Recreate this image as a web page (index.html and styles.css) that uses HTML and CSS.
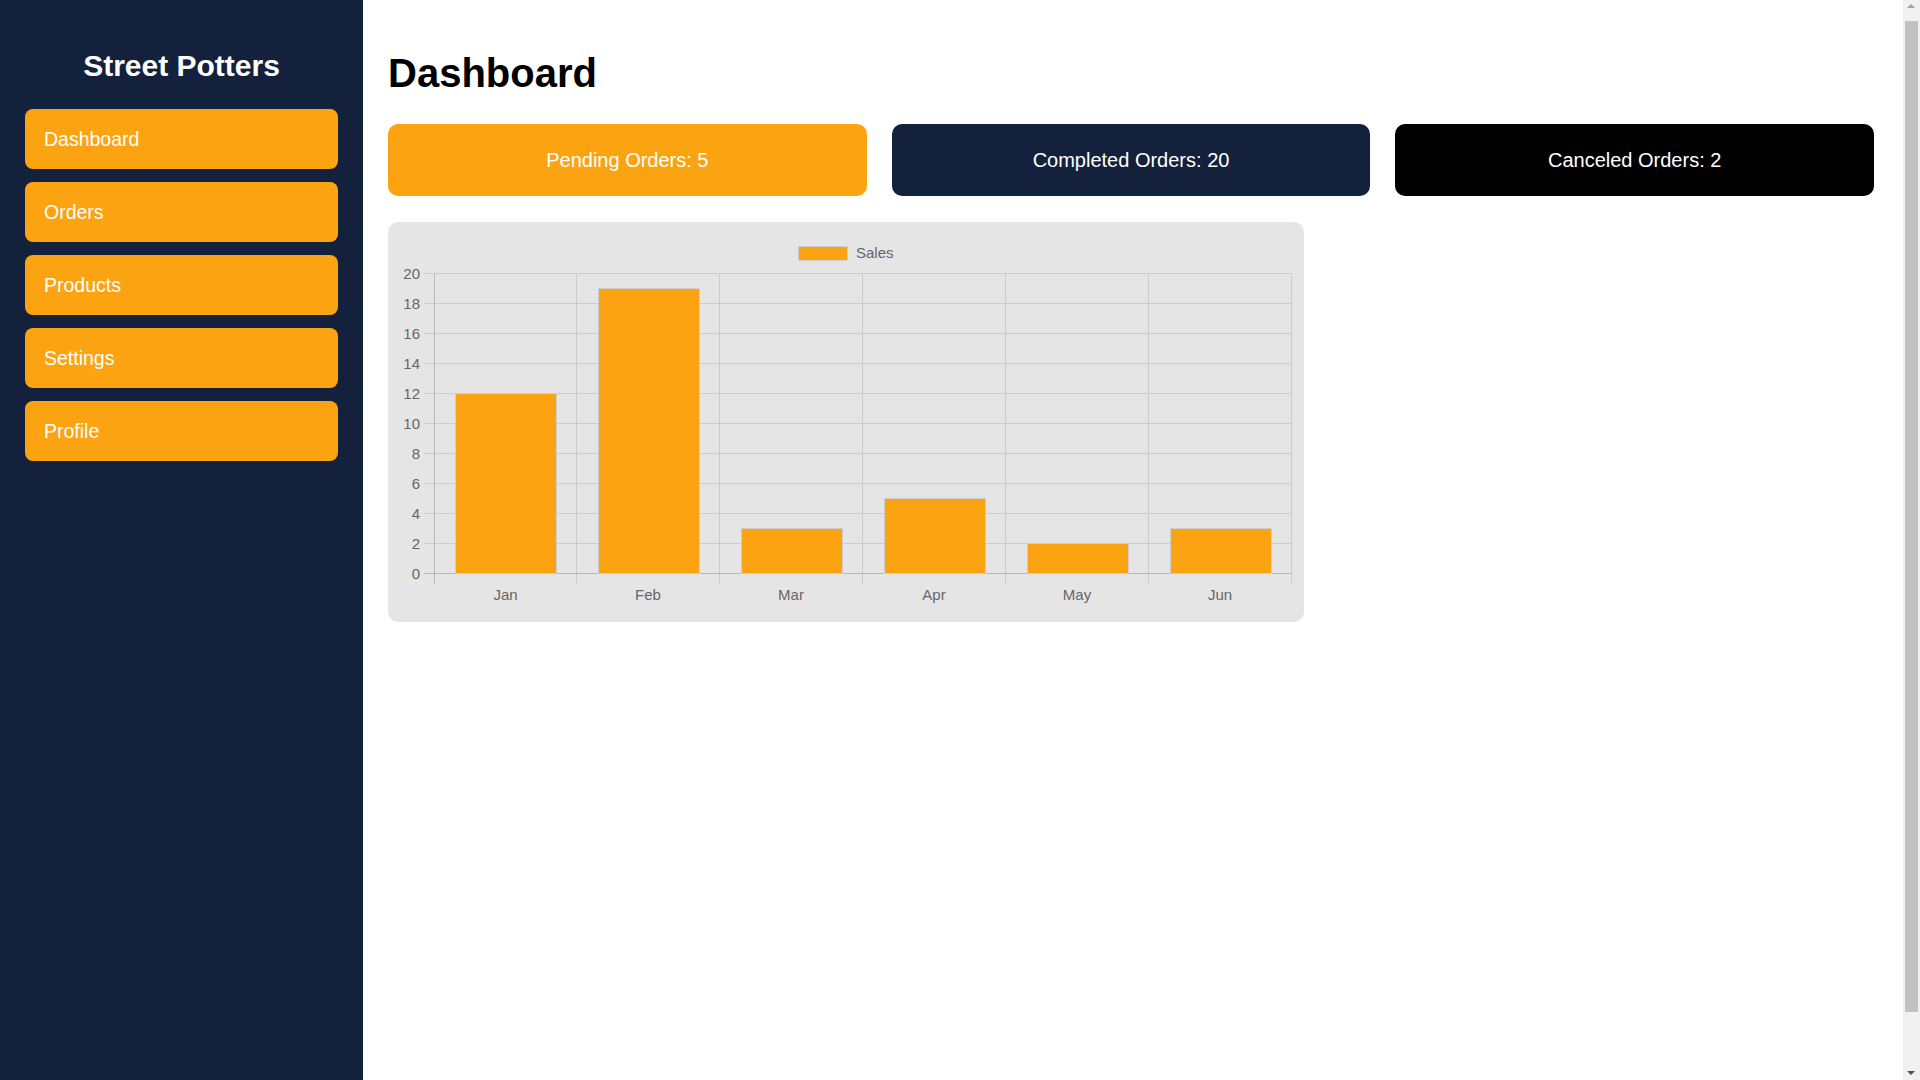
FILE: index.html
```html
<!DOCTYPE html>
<html lang="en">
<head>
    <meta charset="UTF-8">
    <meta name="viewport" content="width=device-width, initial-scale=1.0">
    <title>Street Potters - Dashboard</title>
    <link rel="stylesheet" href="styles.css">
</head>
<body>
    <aside class="sidebar">
        <h2>Street Potters</h2>
        <nav class="menu">
            <a href="#">Dashboard</a>
            <a href="#">Orders</a>
            <a href="#">Products</a>
            <a href="#">Settings</a>
            <a href="#">Profile</a>
        </nav>
    </aside>

    <main class="main">
        <h1>Dashboard</h1>

        <div class="stats">
            <div class="stat pending">Pending Orders: 5</div>
            <div class="stat completed">Completed Orders: 20</div>
            <div class="stat canceled">Canceled Orders: 2</div>
        </div>

        <div class="chart-box">
            <!-- sales per month, bar chart -->
            <svg class="chart" width="896" height="380" viewBox="0 0 896 380">
                <!-- legend -->
                <rect class="bar" x="400.5" y="14.5" width="49" height="14"/>
                <text class="label" x="458" y="25.5">Sales</text>

                <!-- horizontal grid -->
                <g class="grid">
                    <line x1="26.5" y1="41.5" x2="893.5" y2="41.5"/>
                    <line x1="26.5" y1="71.5" x2="893.5" y2="71.5"/>
                    <line x1="26.5" y1="101.5" x2="893.5" y2="101.5"/>
                    <line x1="26.5" y1="131.5" x2="893.5" y2="131.5"/>
                    <line x1="26.5" y1="161.5" x2="893.5" y2="161.5"/>
                    <line x1="26.5" y1="191.5" x2="893.5" y2="191.5"/>
                    <line x1="26.5" y1="221.5" x2="893.5" y2="221.5"/>
                    <line x1="26.5" y1="251.5" x2="893.5" y2="251.5"/>
                    <line x1="26.5" y1="281.5" x2="893.5" y2="281.5"/>
                    <line x1="26.5" y1="311.5" x2="893.5" y2="311.5"/>
                </g>

                <!-- vertical grid -->
                <g class="grid">
                    <line x1="178.5" y1="41.5" x2="178.5" y2="351.5"/>
                    <line x1="321.5" y1="41.5" x2="321.5" y2="351.5"/>
                    <line x1="464.5" y1="41.5" x2="464.5" y2="351.5"/>
                    <line x1="607.5" y1="41.5" x2="607.5" y2="351.5"/>
                    <line x1="750.5" y1="41.5" x2="750.5" y2="351.5"/>
                    <line x1="893.5" y1="41.5" x2="893.5" y2="351.5"/>
                </g>

                <!-- axes -->
                <g class="axis">
                    <line x1="36.5" y1="41.5" x2="36.5" y2="351.5"/>
                    <line x1="26.5" y1="341.5" x2="893.5" y2="341.5"/>
                </g>

                <!-- y ticks -->
                <g class="label y-ticks">
                    <text x="22" y="46.5">20</text>
                    <text x="22" y="76.5">18</text>
                    <text x="22" y="106.5">16</text>
                    <text x="22" y="136.5">14</text>
                    <text x="22" y="166.5">12</text>
                    <text x="22" y="196.5">10</text>
                    <text x="22" y="226.5">8</text>
                    <text x="22" y="256.5">6</text>
                    <text x="22" y="286.5">4</text>
                    <text x="22" y="316.5">2</text>
                    <text x="22" y="346.5">0</text>
                </g>

                <!-- bars -->
                <g>
                    <rect class="bar" x="57.5" y="161.5" width="101" height="180"/>
                    <rect class="bar" x="200.5" y="56.5" width="101" height="285"/>
                    <rect class="bar" x="343.5" y="296.5" width="101" height="45"/>
                    <rect class="bar" x="486.5" y="266.5" width="101" height="75"/>
                    <rect class="bar" x="629.5" y="311.5" width="101" height="30"/>
                    <rect class="bar" x="772.5" y="296.5" width="101" height="45"/>
                </g>

                <!-- x ticks -->
                <g class="label x-ticks">
                    <text x="107.5" y="368">Jan</text>
                    <text x="250" y="368">Feb</text>
                    <text x="393" y="368">Mar</text>
                    <text x="536" y="368">Apr</text>
                    <text x="679" y="368">May</text>
                    <text x="822" y="368">Jun</text>
                </g>
            </svg>
        </div>
    </main>

    <div class="scrollbar" aria-hidden="true">
        <span class="arrow up"></span>
        <span class="thumb"></span>
        <span class="arrow down"></span>
    </div>
</body>
</html>
```

FILE: styles.css
```css
* {
    box-sizing: border-box;
}

body {
    margin: 0;
    display: flex;
    font-family: "Liberation Sans", Arial, sans-serif;
    background: #fff;
}

.sidebar {
    box-sizing: content-box;
    width: 313px;
    min-height: 100vh;
    padding: 25px;
    background: #14213d;
    flex-shrink: 0;
}

.sidebar h2 {
    margin: 24px 0 26px;
    color: #fff;
    font-size: 30px;
    line-height: 34px;
    text-align: center;
}

.menu a {
    display: block;
    height: 60px;
    line-height: 60px;
    padding: 0 19px;
    margin-bottom: 13px;
    background: #fca311;
    color: #fff;
    font-size: 19.5px;
    text-decoration: none;
    border-radius: 8px;
}

.main {
    flex: 1;
    padding: 25px 46px 25px 25px;
}

.main h1 {
    margin: 25px 0 28px;
    font-size: 40px;
    line-height: 46px;
    color: #000;
}

.stats {
    display: flex;
    gap: 25px;
}

.stat {
    flex: 1;
    padding: 25px 0;
    line-height: 22px;
    font-size: 20px;
    color: #fff;
    text-align: center;
    border-radius: 10px;
}

.pending {
    background: #fca311;
}

.completed {
    background: #14213d;
}

.canceled {
    background: #000;
}

.chart-box {
    width: 916px;
    margin-top: 26px;
    padding: 10px;
    background: #e5e5e5;
    border-radius: 10px;
}

.chart {
    display: block;
}

.grid line {
    stroke: #cbcbcb;
    stroke-width: 1;
}

.axis line {
    stroke: #b8b8b8;
    stroke-width: 1;
}

.bar {
    fill: #fca311;
    stroke: #cfcfcf;
    stroke-width: 1;
}

.label {
    fill: #666;
    font-family: "Liberation Sans", Arial, sans-serif;
    font-size: 15px;
}

.y-ticks {
    text-anchor: end;
}

.x-ticks {
    text-anchor: middle;
}

/* page scroll rail on the right edge */
.scrollbar {
    position: fixed;
    top: 0;
    right: 0;
    width: 17px;
    height: 100vh;
    background: #f1f1f1;
    display: flex;
    flex-direction: column;
    align-items: center;
}

.arrow {
    position: relative;
    width: 17px;
    height: 17px;
    flex-shrink: 0;
}

.arrow::after {
    content: "";
    position: absolute;
    left: 4px;
    border-left: 4.5px solid transparent;
    border-right: 4.5px solid transparent;
}

.up::after {
    top: 4px;
    border-bottom: 4px solid #a3a3a3;
}

.down {
    margin-top: auto;
}

.down::after {
    bottom: 5px;
    border-top: 4px solid #505050;
}

.thumb {
    width: 13px;
    height: 991px;
    margin-top: 4px;
    background: #c1c1c1;
}
```
